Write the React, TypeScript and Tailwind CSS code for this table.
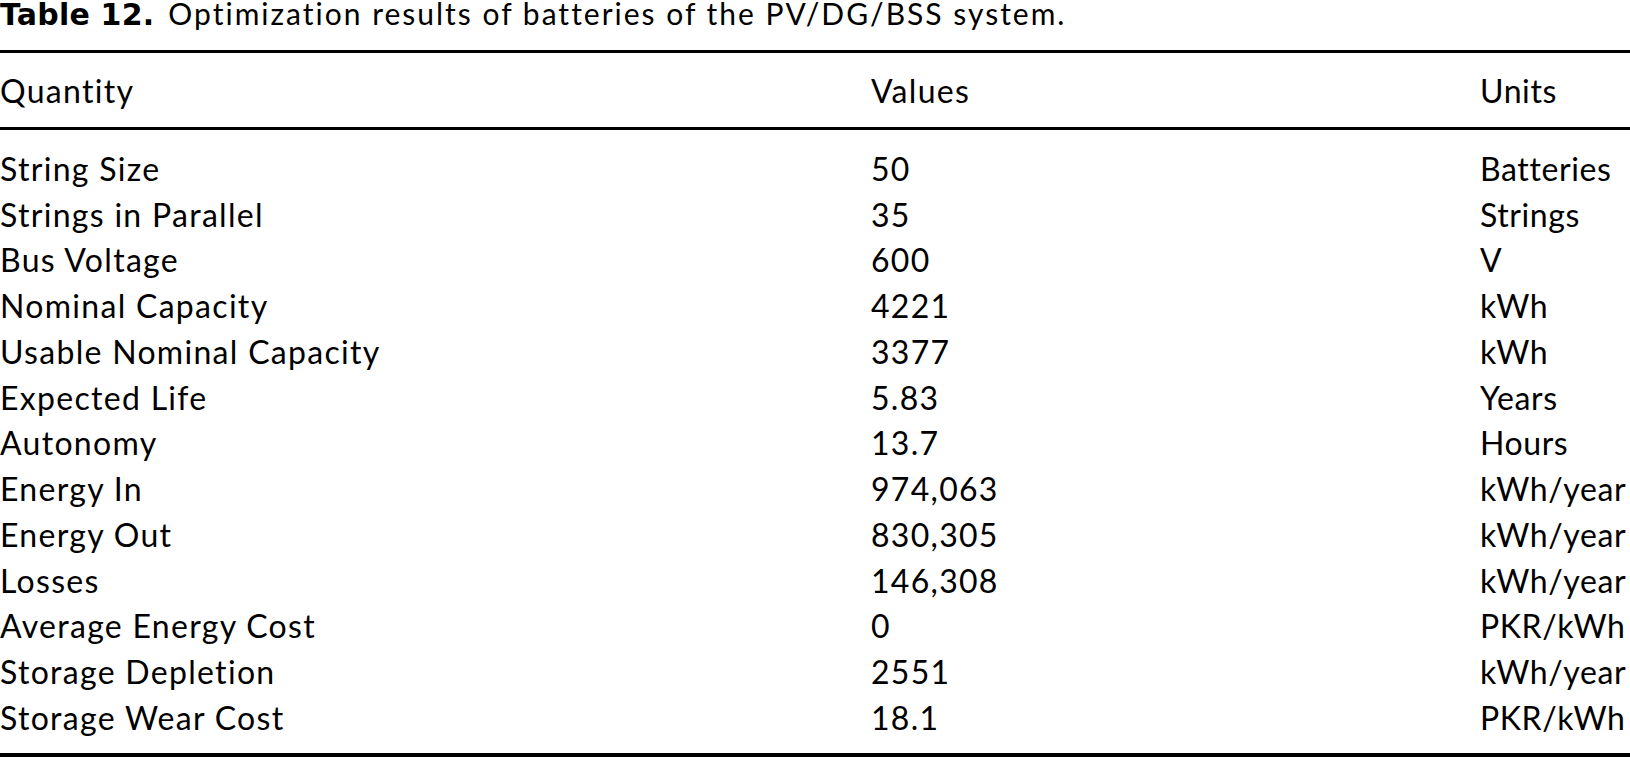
import React from "react";

const rows: [string, string, string][] = [
  ["String Size", "50", "Batteries"],
  ["Strings in Parallel", "35", "Strings"],
  ["Bus Voltage", "600", "V"],
  ["Nominal Capacity", "4221", "kWh"],
  ["Usable Nominal Capacity", "3377", "kWh"],
  ["Expected Life", "5.83", "Years"],
  ["Autonomy", "13.7", "Hours"],
  ["Energy In", "974,063", "kWh/year"],
  ["Energy Out", "830,305", "kWh/year"],
  ["Losses", "146,308", "kWh/year"],
  ["Average Energy Cost", "0", "PKR/kWh"],
  ["Storage Depletion", "2551", "kWh/year"],
  ["Storage Wear Cost", "18.1", "PKR/kWh"],
];

export default function App() {
  return (
    <div className="w-[1630px] h-[757px] bg-white text-black overflow-hidden font-['Lato',sans-serif] text-[32px] tracking-[1.3px] [font-variant-ligatures:none]">
      <div className="h-[50px] flex items-start">
        <div className="text-[30px] leading-[26px] whitespace-nowrap">
          <span className="font-['DejaVu_Sans',sans-serif] font-bold tracking-[0.2px]">Table 12.</span>
          <span className="ml-[14px] tracking-[2px]">Optimization results of batteries of the PV/DG/BSS system.</span>
        </div>
      </div>
      <div className="border-t-[3px] border-black" />
      <div className="grid grid-cols-[871px_609px_1fr] h-[74px] items-center pt-[2px] whitespace-nowrap">
        <div>Quantity</div>
        <div>Values</div>
        <div className="tracking-[0.6px]">Units</div>
      </div>
      <div className="border-t-[3px] border-black" />
      <div className="pt-[15px] h-[623px]">
        {rows.map(([q, v, u]) => (
          <div key={q} className="grid grid-cols-[871px_609px_1fr] h-[45.74px] items-center whitespace-nowrap">
            <div>{q}</div>
            <div>{v}</div>
            <div className="tracking-[0.6px]">{u}</div>
          </div>
        ))}
      </div>
      <div className="border-t-[4px] border-black" />
    </div>
  );
}
